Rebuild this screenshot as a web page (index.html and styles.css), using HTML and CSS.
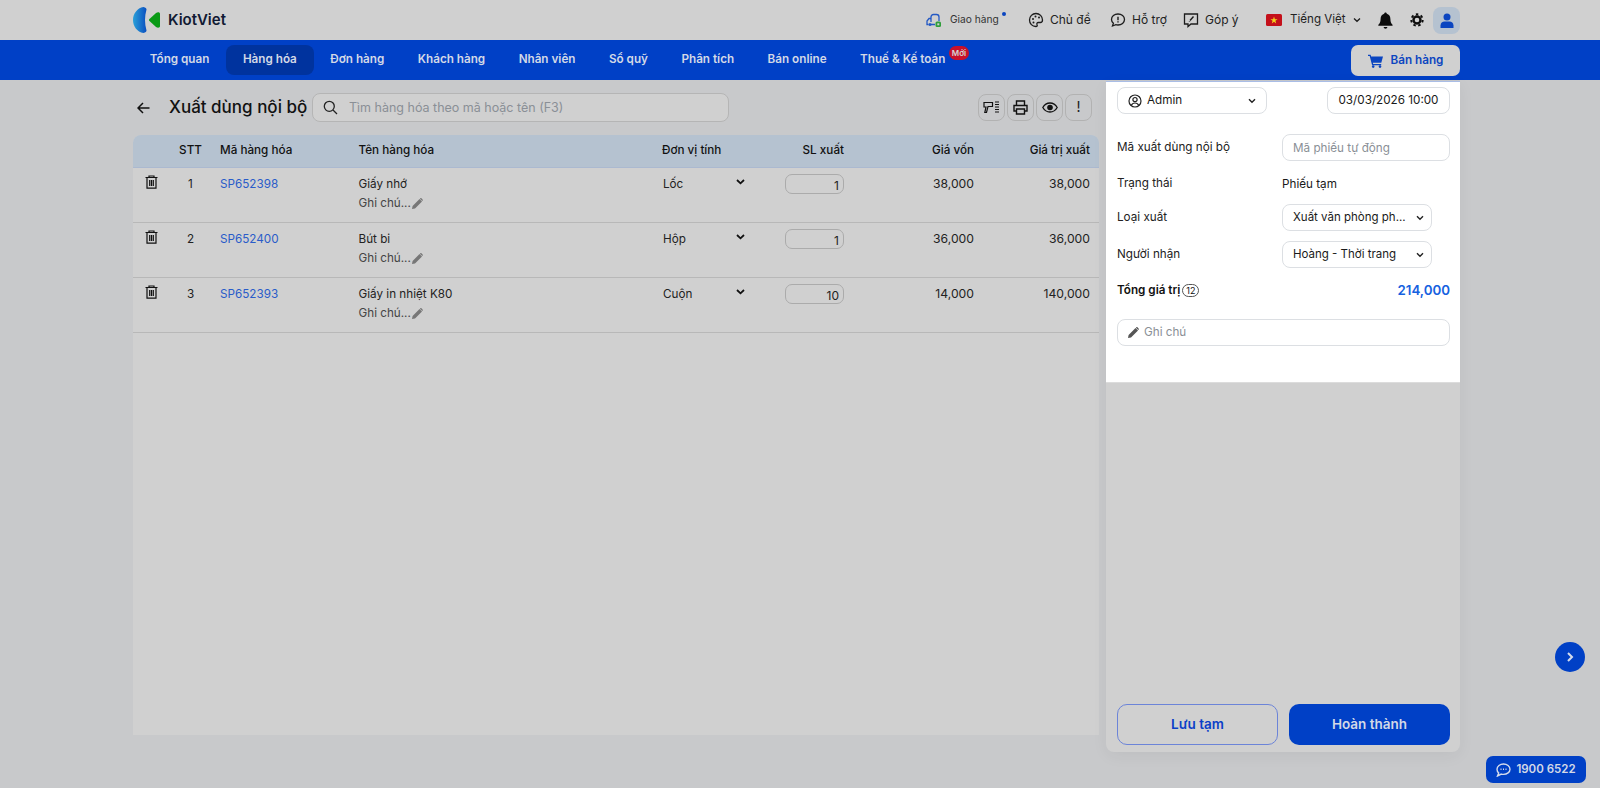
FILE: index.html
```html
<!DOCTYPE html>
<html lang="vi">
<head>
<meta charset="utf-8">
<title>Xuất dùng nội bộ</title>
<link rel="stylesheet" href="styles.css">
</head>
<body>
<header class="topbar">
  <a class="logo">
    <svg width="28" height="26" viewBox="0 0 28 26"><defs><linearGradient id="lg" x1="0" x2="1" y1="0" y2="0"><stop offset="0" stop-color="#2aa0d8"/><stop offset="1" stop-color="#0a4fc0"/></linearGradient></defs><path d="M10.500 0 C4 1 0 7 0 13 C0 19 4 25 10.500 26 C12.500 25.500 13.500 24.500 13.500 23.500 C12.500 20 12 16.500 12 13 C12 9.500 12.500 6 13.500 2.500 C13.500 1.500 12.500 .5 10.500 0Z" fill="url(#lg)"/><path d="M16.200 13.800 C15.900 13.300 15.900 12.700 16.200 12.200 L23 6 C25 4.800 27 5.300 27 7 L27 19 C27 20.700 25 21.200 23 20Z" fill="#0a9a16"/></svg>
    <span>KiotViet</span>
  </a>
  <div class="top-tools">
    <span class="tool tool-ship">
      <svg width="16" height="16" viewBox="0 0 16 16" fill="none"><path d="M5 10V5C5 3.500 6 2.500 7.500 2.500h3C12 2.500 13 3.500 13 5V9" stroke="#2459c4" stroke-width="1.300"/><path d="M5 6.500H3L1 9v3.500h1.500M5 12.500h4" stroke="#2459c4" stroke-width="1.300"/><circle cx="4" cy="12.500" r="1.500" fill="#2459c4"/><rect x="9.500" y="9.500" width="5.500" height="5.500" rx="1.500" fill="#2e9e3a"/><rect x="11.300" y="11.300" width="2" height="2" fill="#d0d0d0"/></svg>
      <span class="ship-label">Giao hàng</span><i class="ship-dot"></i>
    </span>
    <span class="tool tool-theme">
      <svg width="16" height="16" viewBox="0 0 16 16" fill="none"><path d="M8 1.500C4.300 1.500 1.500 4.300 1.500 8s2.800 6.500 6.300 6.500c1.500 0 1.700-1 1.200-2-.5-1.100.2-2 1.300-2h2c1.300 0 2.200-.9 2.200-2.500 0-3.600-2.900-6.500-6.500-6.500Z" stroke="#1c1c1c" stroke-width="1.300"/><circle cx="5" cy="7" r="1" fill="#1c1c1c"/><circle cx="7.500" cy="4.500" r="1" fill="#1c1c1c"/><circle cx="11" cy="5.500" r="1" fill="#1c1c1c"/><circle cx="5.500" cy="10.500" r="1" fill="#1c1c1c"/></svg>
      <span>Chủ đề</span>
    </span>
    <span class="tool tool-help">
      <svg width="16" height="16" viewBox="0 0 16 16" fill="none"><path d="M8 2c3.600 0 6.500 2.400 6.500 5.500S11.600 13 8 13c-.8 0-1.500-.1-2.200-.3L2.500 14l.9-2.800C2.200 10.200 1.500 9 1.500 7.500 1.500 4.400 4.400 2 8 2Z" stroke="#1c1c1c" stroke-width="1.300"/><path d="M8 4.800v3.400M8 9.300v1.100" stroke="#1c1c1c" stroke-width="1.400"/></svg>
      <span>Hỗ trợ</span>
    </span>
    <span class="tool tool-feedback">
      <svg width="16" height="16" viewBox="0 0 16 16" fill="none"><path d="M1.500 2h13v10H8l-3 2.500V12H1.500Z" stroke="#1c1c1c" stroke-width="1.300"/><path d="M10.500 4.500 7 8.500M6.500 9.300v.5" stroke="#1c1c1c" stroke-width="1.400"/></svg>
      <span>Góp ý</span>
    </span>
    <span class="tool tool-lang">
      <svg class="flag" width="16" height="12" viewBox="0 0 16 12"><rect width="16" height="12" rx="1.500" fill="#c4101a"/><path d="M8 2.500 8.900 5.200H11.600L9.400 6.800 10.200 9.500 8 7.800 5.800 9.500 6.600 6.800 4.400 5.200H7.100Z" fill="#f3d21c"/></svg>
      <span>Tiếng Việt</span>
      <svg class="chev" width="8" height="6" viewBox="0 0 8 6" fill="none"><path d="M1 1.500 4 4.300 7 1.500" stroke="#1c1c1c" stroke-width="1.300"/></svg>
    </span>
    <svg class="tool-bell" width="15" height="17" viewBox="0 0 15 17"><path d="M7.500 0.500c.8 0 1.300.6 1.300 1.300C11 2.400 12.400 4.300 12.400 7c0 3 .8 4.500 2.100 5.800.3.400.1 1-.5 1H.9c-.6 0-.8-.6-.5-1C1.700 11.500 2.600 10 2.600 7c0-2.700 1.400-4.600 3.600-5.200 0-.7.500-1.300 1.300-1.300Z" fill="#0c0c0c"/><path d="M5.700 15h3.600c0 1-.8 1.700-1.800 1.700S5.700 16 5.700 15Z" fill="#0c0c0c"/></svg>
    <svg class="tool-gear" width="14" height="14" viewBox="0 0 14 14" fill="none"><circle cx="7" cy="7" r="3.500" stroke="#0c0c0c" stroke-width="2.400"/><circle cx="7" cy="7" r="5.700" stroke="#0c0c0c" stroke-width="1.900" stroke-dasharray="2.500 2.500"/></svg>
    <span class="avatar"><svg width="14" height="15" viewBox="0 0 14 15"><circle cx="7" cy="4" r="3.500" fill="#0b45c0"/><path d="M0.500 15v-2.500C0.500 10 2.500 8.500 4.500 8.500h5c2 0 4 1.500 4 4V15Z" fill="#0b45c0"/></svg></span>
  </div>
</header>

<nav class="navbar">
  <ul class="nav-items">
    <li>Tổng quan</li>
    <li class="active">Hàng hóa</li>
    <li>Đơn hàng</li>
    <li>Khách hàng</li>
    <li>Nhân viên</li>
    <li>Sổ quỹ</li>
    <li>Phân tích</li>
    <li>Bán online</li>
    <li class="has-badge">Thuế &amp; Kế toán<b class="badge">Mới</b></li>
  </ul>
  <button class="sell-btn">
    <svg width="15" height="14" viewBox="0 0 15 14"><path d="M0 .8h2.600l.5 1.700H15l-1.700 6.200H4.900l.3 1.300h8v1.300H4.100L1.700 2.100H0Z" fill="#0b45c0"/><circle cx="5.200" cy="12.600" r="1.300" fill="#0b45c0"/><circle cx="12" cy="12.600" r="1.300" fill="#0b45c0"/></svg>
    <span>Bán hàng</span>
  </button>
</nav>

<main class="page">
  <section class="content">
    <div class="toolbar">
      <svg class="back" width="13" height="12" viewBox="0 0 13 12" fill="none"><path d="M12.500 6H1.500M6 1 1 6l5 5" stroke="#111" stroke-width="1.500"/></svg>
      <h1>Xuất dùng nội bộ</h1>
      <label class="search">
        <svg width="15" height="15" viewBox="0 0 15 15" fill="none"><circle cx="6.300" cy="6.300" r="5" stroke="#222" stroke-width="1.300"/><path d="m10 10 4 4" stroke="#222" stroke-width="1.300"/></svg>
        <input type="text" placeholder="Tìm hàng hóa theo mã hoặc tên (F3)">
      </label>
      <div class="actions">
        <button class="icon-btn"><svg width="17" height="14" viewBox="0 0 17 14" fill="none"><path d="M1 1.500h8.500V5.500H5L3.500 11.500H1.800L3 6H1Z" stroke="#111" stroke-width="1.200"/><path d="M12 1h4M12 3.500h4M12 6h4M12 8.500h4M12 11h4" stroke="#111" stroke-width="1.100"/></svg></button>
        <button class="icon-btn"><svg width="15" height="15" viewBox="0 0 15 15" fill="none"><path d="M3.500 5V1h8v4M3.500 11H1V5.500h13V11h-2.500" stroke="#111" stroke-width="1.400"/><path d="M3.500 9h8v5h-8z" stroke="#111" stroke-width="1.400"/></svg></button>
        <button class="icon-btn"><svg width="16" height="11" viewBox="0 0 16 11" fill="none"><path d="M.8 5.500C2.500 2.500 5 1 8 1s5.500 1.500 7.200 4.500C13.500 8.500 11 10 8 10S2.500 8.500.8 5.500Z" stroke="#111" stroke-width="1.300"/><circle cx="8" cy="5.500" r="2.800" fill="#111"/></svg></button>
        <button class="icon-btn bang">!</button>
      </div>
    </div>

    <div class="table">
      <div class="row head">
        <span></span>
        <span class="c">STT</span>
        <span class="code">Mã hàng hóa</span>
        <span>Tên hàng hóa</span>
        <span>Đơn vị tính</span>
        <span class="r qty-head">SL xuất</span>
        <span class="r">Giá vốn</span>
        <span class="r">Giá trị xuất</span>
      </div>

      <div class="row item">
        <svg class="trash" width="13" height="14" viewBox="0 0 13 14" fill="none"><path d="M.5 2.500h12M4 2.500V1h5v1.500M2 2.500v10.700h9V2.500" stroke="#111" stroke-width="1.200"/><path d="M4.700 5v6M6.500 5v6M8.300 5v6" stroke="#111" stroke-width="1.200"/></svg>
        <span class="c">1</span>
        <a class="code link">SP652398</a>
        <div class="name"><span>Giấy nhớ</span><span class="note">Ghi chú...<svg width="11" height="11" viewBox="0 0 11 11"><path d="M0 11l.6-3L7.500 1 10 3.500 3 10.400ZM8.200.4c.4-.4 1-.4 1.400 0l1 1c.4.400.4 1 0 1.400l-.3.300L7.900.7Z" fill="#777"/></svg></span></div>
        <div class="unit"><span>Lốc</span><svg width="9" height="6" viewBox="0 0 9 6" fill="none"><path d="M1 1 4.500 4.300 8 1" stroke="#111" stroke-width="1.800"/></svg></div>
        <div class="r"><input class="qty" type="text" value="1"></div>
        <span class="r num">38,000</span>
        <span class="r num">38,000</span>
      </div>

      <div class="row item">
        <svg class="trash" width="13" height="14" viewBox="0 0 13 14" fill="none"><path d="M.5 2.500h12M4 2.500V1h5v1.500M2 2.500v10.700h9V2.500" stroke="#111" stroke-width="1.200"/><path d="M4.700 5v6M6.500 5v6M8.300 5v6" stroke="#111" stroke-width="1.200"/></svg>
        <span class="c">2</span>
        <a class="code link">SP652400</a>
        <div class="name"><span>Bút bi</span><span class="note">Ghi chú...<svg width="11" height="11" viewBox="0 0 11 11"><path d="M0 11l.6-3L7.500 1 10 3.500 3 10.400ZM8.200.4c.4-.4 1-.4 1.400 0l1 1c.4.400.4 1 0 1.400l-.3.300L7.900.7Z" fill="#777"/></svg></span></div>
        <div class="unit"><span>Hộp</span><svg width="9" height="6" viewBox="0 0 9 6" fill="none"><path d="M1 1 4.500 4.300 8 1" stroke="#111" stroke-width="1.800"/></svg></div>
        <div class="r"><input class="qty" type="text" value="1"></div>
        <span class="r num">36,000</span>
        <span class="r num">36,000</span>
      </div>

      <div class="row item">
        <svg class="trash" width="13" height="14" viewBox="0 0 13 14" fill="none"><path d="M.5 2.500h12M4 2.500V1h5v1.500M2 2.500v10.700h9V2.500" stroke="#111" stroke-width="1.200"/><path d="M4.700 5v6M6.500 5v6M8.300 5v6" stroke="#111" stroke-width="1.200"/></svg>
        <span class="c">3</span>
        <a class="code link">SP652393</a>
        <div class="name"><span>Giấy in nhiệt K80</span><span class="note">Ghi chú...<svg width="11" height="11" viewBox="0 0 11 11"><path d="M0 11l.6-3L7.500 1 10 3.500 3 10.400ZM8.200.4c.4-.4 1-.4 1.400 0l1 1c.4.400.4 1 0 1.400l-.3.300L7.900.7Z" fill="#777"/></svg></span></div>
        <div class="unit"><span>Cuộn</span><svg width="9" height="6" viewBox="0 0 9 6" fill="none"><path d="M1 1 4.500 4.300 8 1" stroke="#111" stroke-width="1.800"/></svg></div>
        <div class="r"><input class="qty" type="text" value="10"></div>
        <span class="r num">14,000</span>
        <span class="r num">140,000</span>
      </div>
    </div>
  </section>

  <aside class="side">
    <div class="side-top">
      <div class="side-head">
        <div class="box admin">
          <svg width="14" height="14" viewBox="0 0 14 14" fill="none"><circle cx="7" cy="7" r="6" stroke="#222" stroke-width="1.200"/><circle cx="7" cy="5.600" r="2.100" stroke="#222" stroke-width="1.200"/><path d="M3.300 11.400c.7-1.700 2-2.400 3.700-2.400s3 .7 3.700 2.400" stroke="#222" stroke-width="1.200"/></svg>
          <span>Admin</span>
          <svg class="sel-chev" width="8" height="6" viewBox="0 0 8 6" fill="none"><path d="M1 1.300 4 4.300 7 1.300" stroke="#222" stroke-width="1.400"/></svg>
        </div>
        <div class="box date">03/03/2026 10:00</div>
      </div>
      <div class="form">
        <span class="lbl">Mã xuất dùng nội bộ</span>
        <input class="box field" type="text" placeholder="Mã phiếu tự động">
        <span class="lbl status-lbl">Trạng thái</span>
        <span class="status-val">Phiếu tạm</span>
        <span class="lbl">Loại xuất</span>
        <div class="box pick"><span>Xuất văn phòng ph...</span><svg class="sel-chev" width="8" height="6" viewBox="0 0 8 6" fill="none"><path d="M1 1.300 4 4.300 7 1.300" stroke="#222" stroke-width="1.400"/></svg></div>
        <span class="lbl">Người nhận</span>
        <div class="box pick"><span>Hoàng - Thời trang</span><svg class="sel-chev" width="8" height="6" viewBox="0 0 8 6" fill="none"><path d="M1 1.300 4 4.300 7 1.300" stroke="#222" stroke-width="1.400"/></svg></div>
      </div>
      <div class="total">
        <span class="total-lbl">Tổng giá trị<i class="count">12</i></span>
        <span class="total-val">214,000</span>
      </div>
      <label class="box memo">
        <svg width="11" height="11" viewBox="0 0 11 11"><path d="M0 11l.6-3L7.500 1 10 3.500 3 10.400ZM8.200.4c.4-.4 1-.4 1.400 0l1 1c.4.400.4 1 0 1.400l-.3.300L7.900.7Z" fill="#555"/></svg>
        <input type="text" placeholder="Ghi chú">
      </label>
    </div>
    <div class="side-foot">
      <button class="btn ghost">Lưu tạm</button>
      <button class="btn solid">Hoàn thành</button>
    </div>
  </aside>
</main>

<button class="fab"><svg width="8" height="10" viewBox="0 0 8 10" fill="none"><path d="M2 1 6 5 2 9" stroke="#d5dcec" stroke-width="2"/></svg></button>
<a class="hotline">
  <svg width="15" height="14" viewBox="0 0 15 14" fill="none"><path d="M7.500 1C11 1 14 3.200 14 6.200s-3 5.200-6.500 5.200c-.8 0-1.500-.1-2.200-.3L1.500 13l1.200-3C1.600 9 1 7.700 1 6.200 1 3.200 4 1 7.500 1Z" stroke="#d5dcec" stroke-width="1.400"/><path d="M4.500 6.300h1M7 6.300h1M9.500 6.300h1" stroke="#d5dcec" stroke-width="1.500"/></svg>
  <span>1900 6522</span>
</a>
</body>
</html>
```

FILE: styles.css
```css
* { box-sizing: border-box; }
html, body { margin: 0; height: 788px; overflow: hidden; }
body {
  background: #c8c9cb;
  color: #1a1a1a;
  font: 400 11.700px/1.3 Inter, "Liberation Sans", sans-serif;
  position: relative;
}
ul { list-style: none; margin: 0; padding: 0; }
button, input { font: inherit; color: inherit; }

/* top bar */
.topbar {
  height: 40px;
  background: #d0d0d0;
  display: flex;
  align-items: center;
  padding: 0 140px 0 133px;
  justify-content: space-between;
}
.logo { display: flex; align-items: center; gap: 7px; font-size: 15px; font-weight: 600; color: #101a33; }
.top-tools { display: flex; align-items: center; height: 100%; }
.tool { display: flex; align-items: center; gap: 6px; color: #222; font-size: 12px; }
.tool-ship { width: 102px; gap: 8px; position: relative; }
.ship-label { font-size: 10.200px; color: #333; }
.ship-dot { position: absolute; left: 76px; top: 0; width: 4px; height: 4px; border-radius: 50%; background: #0b45c0; }
.tool-theme { width: 82px; }
.tool-help { width: 73px; }
.tool-feedback { width: 83px; }
.tool-lang { width: 112px; gap: 8px; font-size: 11.600px; }
.flag { flex: none; }
.chev { margin-left: -1px; }
.tool-bell { margin-right: 17px; }
.tool-gear { margin-right: 9px; }
.avatar {
  width: 27px; height: 27px; border-radius: 8px; background: #b5c2d0;
  display: flex; align-items: center; justify-content: center;
}

/* nav */
.navbar {
  height: 40px;
  background: #0040c6;
  display: flex;
  align-items: center;
  justify-content: space-between;
  padding: 0 140px 0 133px;
}
.nav-items { display: flex; gap: 0; align-items: center; }
.nav-items li {
  height: 30px;
  padding: 0 16.750px;
  border-radius: 8px;
  display: flex; align-items: center;
  color: #d3d9e6;
  font-size: 11.700px;
  font-weight: 600;
}
.nav-items li.active { background: #00339e; }
.has-badge { position: relative; }
.badge {
  position: absolute; right: -7px; top: 1px;
  height: 14px; padding: 0 3px; border-radius: 7px;
  background: #c8102a; color: #d3d3d3;
  font-size: 8px; line-height: 14px; font-weight: 600;
}
.sell-btn {
  width: 109px; height: 31px; margin-top: 1px;
  display: flex; align-items: center; justify-content: center; gap: 8px;
  border: 0; border-radius: 7px; background: #d0d0d0;
  color: #0b45c0; font-weight: 600; font-size: 11.700px;
}

/* page */
.page { display: flex; gap: 7px; padding-left: 133px; height: 708px; }
.content { width: 966px; display: flex; flex-direction: column; }
.toolbar { height: 55px; display: flex; align-items: center; }
.back { margin: 0 0 0 4px; flex: none; }
.toolbar h1 { margin: 0 0 0 19px; width: 143px; font-size: 17px; font-weight: 500; color: #111; white-space: nowrap; flex: none; }
.search {
  width: 417px; height: 29px; margin-right: 249px; flex: none;
  display: flex; align-items: center; gap: 11px; padding: 0 11px 0 10px;
  border: 1px solid #b5b5b5; border-radius: 8px; background: #d0d0d0;
}
.search input { flex: 1; border: 0; outline: 0; background: none; font-size: 12.500px; padding: 1px 0 0; }
.search input::placeholder, .field::placeholder, .memo input::placeholder { color: #8a8f96; opacity: 1; }
.actions { display: flex; gap: 2px; }
.icon-btn {
  width: 27px; height: 27px; padding: 0; flex: none;
  display: flex; align-items: center; justify-content: center;
  border: 1px solid #b2b2b2; border-radius: 8px; background: none;
}
.bang { font-size: 14px; }

/* table */
.table { flex: 0 0 600px; background: #d0d0d0; border-radius: 8px 8px 0 0; }
.row {
  display: grid;
  grid-template-columns: 37px 41px 147.500px 303.500px 90px 92px 130px 116px;
  padding-right: 9px;
}
.head {
  height: 33px; align-items: center;
  background: #b5c2d0; border-radius: 8px 8px 0 0;
  font-weight: 500; font-size: 11.700px; color: #111;
  border-bottom: 1px solid #abb9d0;
}
.item { height: 55px; border-bottom: 1px solid #b8b8b8; padding-top: 7px; font-size: 11.700px; color: #222; }
.item > span, .item > a { line-height: 18px; }
.unit > span { line-height: 19px; }
.name > span:first-child { line-height: 19px; }
.num { font-size: 12.200px; }
.c { text-align: center; }
.r { text-align: right; }
.code { padding-left: 9px; }
.link { color: #2a5cc9; }
.trash { margin: 0 0 0 12px; }
.name { display: flex; flex-direction: column; }
.note { color: #444; display: flex; align-items: center; line-height: 19px; }
.note svg { margin-left: 1px; }
.unit { display: flex; justify-content: space-between; padding: 0 7px 0 1px; }
.unit svg { margin-top: 4px; }
.qty {
  width: 59px; height: 20px; padding: 2px 4px 0 0; text-align: right;
  border: 1px solid #ababab; border-radius: 7px; background: none; outline: 0;
  font-size: 12px; display: block; margin: -1px 0 0 auto;
}

/* side */
.side {
  width: 354px; height: 671px; margin-top: 1px;
  background: #d0d0d0; border-radius: 0 0 8px 8px;
  box-shadow: 0 4px 16px rgba(0, 0, 0, .05);
  display: flex; flex-direction: column; justify-content: space-between;
}
.side-top { height: 302px; padding: 5px 10px 0 11px; background: #fff; border-top: 1px solid #a9bde6; border-bottom: 1px solid #dcdcdc; }
.box {
  height: 27px; border: 1px solid #dcdfe3; border-radius: 8px; background: #fff; outline: 0;
  display: flex; align-items: center;
}
.side-head { display: flex; justify-content: space-between; }
.admin { width: 150px; padding: 0 10px; gap: 5px; }
.admin .sel-chev { margin-left: auto; }
.date { width: 123px; justify-content: center; }
.form {
  display: grid; grid-template-columns: 165px 150px;
  row-gap: 10px; align-items: center; margin-top: 20px;
  grid-template-rows: 27px 23px 27px 27px;
}
.lbl { color: #222; }
.status-lbl { padding-top: 2px; }
.field { width: 168px; padding: 0 10px; }
.status-val { padding-top: 5px; }
.pick { padding: 0 7px 0 10px; justify-content: space-between; white-space: nowrap; font-size: 11.500px; }
.total { display: flex; justify-content: space-between; align-items: center; margin-top: 12px; height: 22px; }
.total-lbl { display: flex; align-items: center; font-weight: 600; color: #111; }
.count {
  margin-left: 2px; width: 17px; height: 13px; border: 1px solid #555; border-radius: 7px;
  font: 400 9px/11px Inter, sans-serif; text-align: center;
}
.total-val { color: #1561e0; font-size: 13.300px; font-weight: 600; }
.memo { margin-top: 17px; padding: 0 10px; gap: 3px; }
.memo input { flex: 1; border: 0; outline: 0; background: none; }
.side-foot { display: flex; gap: 11px; padding: 0 10px 7px 11px; }
.btn { flex: 0 0 161px; height: 41px; border-radius: 10px; font-weight: 600; font-size: 13.500px; }
.ghost { background: none; border: 1px solid #6c84d8; color: #0b3fc8; }
.solid { background: #0040c6; border: 0; color: #d3d9e6; }

/* floating */
.fab {
  position: absolute; left: 1555px; top: 642px; width: 30px; height: 30px; padding: 0;
  border: 0; border-radius: 50%; background: #0040c6;
  display: flex; align-items: center; justify-content: center;
}
.hotline {
  position: absolute; left: 1486px; top: 756px; width: 100px; height: 27px;
  display: flex; align-items: center; justify-content: center; gap: 5px;
  border-radius: 7px; background: #0040c6; color: #d3d9e6; font-weight: 600; font-size: 11.500px;
}
```
